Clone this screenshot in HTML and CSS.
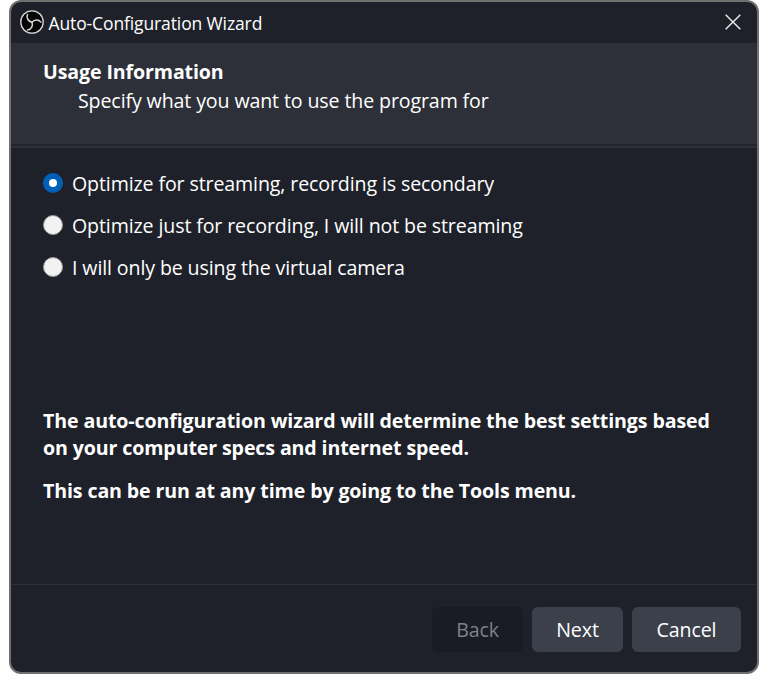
FILE: index.html
```html
<!DOCTYPE html>
<html lang="en"><head><meta charset="utf-8"><title>Auto-Configuration Wizard</title><link rel="stylesheet" href="styles.css"></head>
<body>
<main class="window">
  <header class="titlebar">
    <svg class="logo" viewBox="0 0 24 24"><circle cx="12" cy="12" r="11.2" fill="#050506" stroke="#d8d8da" stroke-width="1.3"/><g fill="none" stroke="#d8d8da" stroke-width="1.5" stroke-linecap="round"><path id="arm" d="M12 12.2C8.5 11.5 6 8.3 7.5 4.5"/><use href="#arm" transform="rotate(120 12 12.2)"/><use href="#arm" transform="rotate(240 12 12.2)"/></g></svg>
    <span class="title">Auto-Configuration Wizard</span>
    <svg class="close" viewBox="0 0 16 16"><path d="M.7 .7L15.3 15.3M15.3 .7L.7 15.3" stroke="#eee" stroke-width="1.4"/></svg>
  </header>
  <section class="banner"><h1>Usage Information</h1><p>Specify what you want to use the program for</p></section>
  <section class="content">
    <div class="option"><span class="radio checked"></span><span>Optimize for streaming, recording is secondary</span></div>
    <div class="option"><span class="radio"></span><span>Optimize just for recording, I will not be streaming</span></div>
    <div class="option"><span class="radio"></span><span>I will only be using the virtual camera</span></div>
    <div class="notes"><p>The auto-configuration wizard will determine the best settings based<br>on your computer specs and internet speed.</p><p>This can be run at any time by going to the Tools menu.</p></div>
  </section>
  <footer class="actions"><button class="back" disabled>Back</button><button class="next">Next</button><button class="cancel">Cancel</button></footer>
</main>
</body></html>
```
FILE: styles.css
```css
* { box-sizing: border-box; }
body { margin: 0; background: #fff; font: 19.6px/27px "Open Sans", sans-serif; letter-spacing: -0.12px; color: #fff; }
p, h1 { margin: 0; }
.window { width: 750px; height: 674px; margin-left: 9px; border: 2px solid #707070; border-radius: 12px; background: #1e2129; overflow: hidden; display: flex; flex-direction: column; }
.titlebar { height: 41px; flex: none; display: flex; align-items: center; padding: 0 16px 2px 9px; }
.logo { width: 24px; height: 24px; }
.title { margin: 3px 0 0 4.5px; font: 17.5px/24px "Open Sans", sans-serif; }
.close { width: 16px; height: 16px; margin-left: auto; }
.banner { height: 105px; flex: none; background: linear-gradient(#2d3038 101px, #22252c 101px, #22252c 103px, #2d3038 103px); padding: 15px 32px; }
h1 { font-size: inherit; line-height: 27px; font-weight: 700; }
.banner p { padding-left: 35px; margin-top: 2px; }
.content { flex: 1; padding: 21px 32px 0; white-space: nowrap; }
.option { display: flex; align-items: center; height: 28px; margin-bottom: 14px; gap: 9px; }
.radio { width: 20px; height: 20px; border-radius: 50%; background: #f2f2f2; border: 1px solid #999; }
.checked { background: #fff; border: 6px solid #0060b8; }
.notes { margin-top: 126px; font-weight: 700; }
.notes p + p { margin-top: 16px; }
.actions { height: 88px; flex: none; display: flex; justify-content: flex-end; gap: 9px; padding: 22px 16px 0; border-top: 1px solid #2d3038; }
button { height: 45px; border: 0; border-radius: 6px; padding: 0; background: #3c404b; color: #fff; font: inherit; letter-spacing: inherit; }
.back, .next { width: 91px; }
.back { background: #191b25; color: #808085; }
.cancel { width: 109px; }
```
